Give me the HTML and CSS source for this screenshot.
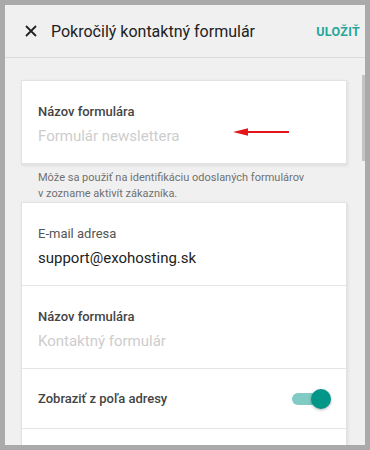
FILE: index.html
```html
<!DOCTYPE html>
<html lang="sk">
<head>
    <meta charset="UTF-8">
    <meta name="viewport" content="width=device-width, initial-scale=1.0">
    <title>Pokročilý kontaktný formulár</title>
    <link rel="stylesheet" href="styles.css">
</head>
<body>

    <div class="dialog">
        <div class="dialog-header">
            <svg class="close-icon" width="12" height="12" viewBox="0 0 12 12">
                <path d="M1 1 L11 11 M11 1 L1 11" stroke="#222" stroke-width="1.8" fill="none"/>
            </svg>
            <h1 class="dialog-title">Pokročilý kontaktný formulár</h1>
            <span class="save-btn">ULOŽIŤ</span>
        </div>

        <div class="dialog-body">
            <div class="scroll-thumb"></div>

            <div class="card">
                <div class="field">
                    <div class="field-label strong">Názov formulára</div>
                    <div class="field-value placeholder">Formulár newslettera</div>
                </div>
                <svg class="arrow" width="58" height="10" viewBox="0 0 58 10">
                    <path d="M14 5 H56" stroke="#e4161b" stroke-width="2.2"/>
                    <path d="M0 5 L15 1.2 L15 8.8 Z" fill="#e4161b"/>
                </svg>
            </div>
            <p class="hint">Môže sa použiť na identifikáciu odoslaných formulárov v zozname aktivít zákazníka.</p>

            <div class="card">
                <div class="field">
                    <div class="field-label">E-mail adresa</div>
                    <div class="field-value">support@exohosting.sk</div>
                </div>
                <div class="field">
                    <div class="field-label strong">Názov formulára</div>
                    <div class="field-value placeholder">Kontaktný formulár</div>
                </div>
                <div class="field switch-row">
                    <span class="field-label strong">Zobraziť z poľa adresy</span>
                    <span class="switch"><span class="switch-knob"></span></span>
                </div>
                <div class="field switch-row"></div>
            </div>
        </div>
    </div>

</body>
</html>
```

FILE: styles.css
```css
body {
    margin: 0;
    padding: 5px 5px 0 5px;
    background-color: #aaaaaa;
    font-family: Roboto, "Liberation Sans", Arial, sans-serif;
    overflow: hidden;
}
.dialog {
    height: 440px;
    background-color: #f0f0f0;
    overflow: hidden;
}
.dialog-header {
    display: flex;
    align-items: center;
    height: 52px;
    padding: 0 5px 0 20px;
    border-bottom: 1px solid #dcdcdc;
}
.close-icon {
    flex: none;
}
.dialog-title {
    flex: 1;
    margin: 0 0 0 14px;
    font-size: 16px;
    font-weight: 400;
    color: #222;
}
.save-btn {
    font-size: 12.5px;
    font-weight: 700;
    color: #26a69a;
    letter-spacing: 0.3px;
}
.dialog-body {
    position: relative;
    padding: 22px 18px 0 16px;
}
.scroll-thumb {
    position: absolute;
    right: 0;
    top: 17px;
    width: 3px;
    height: 86px;
    background-color: #c4c4c4;
}
.card {
    position: relative;
    background-color: white;
    border: 1px solid #e2e2e2;
    box-shadow: 1px 1px 3px rgba(0,0,0,0.08);
}
.field {
    padding: 23px 16px 17px;
    border-bottom: 1px solid #e4e4e4;
}
.card > .field:last-child {
    border-bottom: none;
}
.field-label {
    font-size: 13px;
    line-height: 16px;
    color: #555;
}
.field-label.strong {
    font-weight: 500;
    color: #444;
}
.field-value {
    margin-top: 6px;
    font-size: 15px;
    line-height: 20px;
    color: #222;
}
.placeholder {
    color: #cdcdcd;
}
.arrow {
    position: absolute;
    left: 211px;
    top: 46px;
}
.hint {
    max-width: 268px;
    margin: 0;
    padding: 5px 17px 0;
    font-size: 11px;
    line-height: 16px;
    color: #707070;
    height: 32px;
}
.switch-row {
    display: flex;
    align-items: center;
    justify-content: space-between;
    height: 59px;
    padding-top: 0;
    padding-bottom: 0;
}
.switch {
    position: relative;
    width: 30px;
    height: 12px;
    margin-right: 8px;
    border-radius: 6px;
    background-color: #80cbc4;
}
.switch-knob {
    position: absolute;
    right: -9px;
    top: -4px;
    width: 20px;
    height: 20px;
    border-radius: 50%;
    background-color: #009688;
    box-shadow: 0 1px 3px rgba(0,0,0,0.3);
}
```
